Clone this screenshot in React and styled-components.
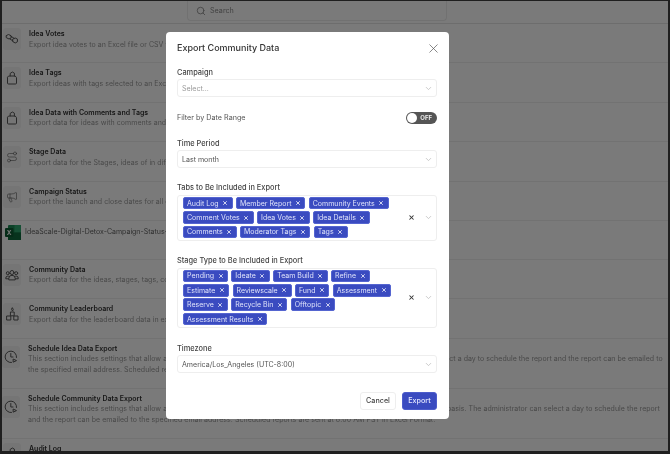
import styled, { createGlobalStyle } from "styled-components"
import { Search, X, ChevronDown, Megaphone, Route } from "lucide-react"

const GlobalStyle = createGlobalStyle`
  html, body {
    margin: 0;
    padding: 0;
    background: #222;
  }
  * {
    box-sizing: border-box;
  }
`

const Screen = styled.div`
  position: relative;
  width: 670px;
  height: 454px;
  overflow: hidden;
  font-family: Inter, "Liberation Sans", sans-serif;
  background: #fff;
  border: solid #1f1f1f;
  border-width: 1px 2px 3px 2px;
`

const Page = styled.div`
  display: flex;
  flex-direction: column;
  filter: blur(0.45px);
`

const TopBar = styled.div`
  height: 23px;
  display: flex;
  justify-content: center;
  border-bottom: 1px solid #e4e4e4;
`

const SearchBox = styled.div`
  width: 260px;
  height: 20px;
  margin-left: -36px;
  padding-left: 8px;
  display: flex;
  align-items: center;
  gap: 4px;
  font-size: 7.2px;
  color: #8a8a8a;
  border: 1px solid #ececec;
  border-top: 0;
  border-radius: 0 0 4px 4px;
`

const Row = styled.div`
  height: ${(p) => p.$height || 39.4}px;
  padding: 4px 0 0 ${(p) => (p.$wide ? 0 : 1)}px;
  display: flex;
  align-items: flex-start;
  gap: 8px;
  border-bottom: 1px solid #eee;
`

const IconBox = styled.div`
  flex: none;
  width: 18px;
  height: 22px;
  margin-top: ${(p) => p.$offset || 0}px;
  display: flex;
  align-items: center;
  justify-content: center;
  color: #555;
  background: #f4f4f4;
  border-radius: 3px;
`

const RowText = styled.div`
  min-width: 0;
  flex: 1;
`

const RowTitle = styled.div`
  font-size: 7px;
  line-height: 11.5px;
  font-weight: 600;
  color: #333;
  white-space: nowrap;
`

const RowDesc = styled.div`
  font-size: 7px;
  line-height: 10.5px;
  letter-spacing: 0.04px;
  color: #999;
  white-space: nowrap;
`

const FileRow = styled.div`
  height: 39px;
  padding: 4px 0 0 3px;
  display: flex;
  align-items: flex-start;
  gap: 2px;
  font-size: 7px;
  line-height: 14px;
  color: #666;
  border-bottom: 1px solid #eee;
`

const Overlay = styled.div`
  position: absolute;
  inset: 0;
  background: rgba(0, 0, 0, 0.52);
`

const Modal = styled.div`
  position: absolute;
  left: 163.5px;
  top: 31px;
  width: 283.5px;
  height: 387px;
  padding: 9px 12px 0 11.5px;
  display: flex;
  flex-direction: column;
  background: #fff;
  border-radius: 4px;
  filter: blur(0.3px);
`

const ModalHead = styled.div`
  height: 22px;
  display: flex;
  align-items: flex-start;
  justify-content: space-between;
`

const ModalTitle = styled.div`
  font-size: 9px;
  line-height: 13px;
  font-weight: 500;
  color: #333;
`

const CloseButton = styled.div`
  margin: 0 -4px 0 0;
  color: #555;
  line-height: 0;
`

const Field = styled.div`
  margin-top: ${(p) => p.$top || 0}px;
`

const Label = styled.div`
  font-size: 7.4px;
  line-height: 10px;
  font-weight: 500;
  color: #444;
  margin-bottom: 1.5px;
`

const SelectBox = styled.div`
  height: ${(p) => p.$height || 18}px;
  padding: 0 ${(p) => (p.$height ? 5 : 4)}px;
  display: flex;
  align-items: center;
  font-size: 7.05px;
  color: ${(p) => (p.$muted ? "#999" : "#555")};
  background: #fff;
  border: 1px solid #eee;
  border-radius: 3px;
`

const SelectValue = styled.div`
  flex: 1;
  min-width: 0;
`

const ChipList = styled.div`
  width: 218px;
  display: flex;
  flex-wrap: wrap;
  gap: 1.8px 3.4px;
`

const Chip = styled.div`
  height: 12.6px;
  padding: 0 3.4px 0 3px;
  display: flex;
  align-items: center;
  gap: 3.5px;
  font-size: 7px;
  color: #dfe3fa;
  white-space: nowrap;
  background: #3a4bc0;
  border: 1px solid #5565d0;
  border-radius: 2px;
`

const ChipClose = styled.span`
  display: flex;
  color: #fff;
`

const ClearAll = styled.span`
  display: flex;
  margin-right: 9px;
  color: #333;
`

const Caret = styled.span`
  display: flex;
  margin-right: ${(p) => (p.$plain ? -1 : -2)}px;
  color: #bbb;
`

const ToggleRow = styled.div`
  height: 14px;
  margin-top: 13.5px;
  display: flex;
  align-items: center;
  justify-content: space-between;
  font-size: 7.2px;
  color: #555;
`

const Toggle = styled.div`
  width: 31px;
  height: 12px;
  padding: 1px 5px 1px 1px;
  display: flex;
  align-items: center;
  justify-content: space-between;
  font-size: 6px;
  font-weight: 700;
  color: #eee;
  background: #555;
  border-radius: 6px;
`

const Knob = styled.div`
  width: 10px;
  height: 10px;
  background: #fff;
  border-radius: 50%;
`

const Actions = styled.div`
  margin-top: 18.5px;
  display: flex;
  justify-content: flex-end;
  gap: 6px;
`

const Button = styled.div`
  width: ${(p) => p.$width}px;
  height: 18px;
  display: flex;
  align-items: center;
  justify-content: center;
  font-size: 7.2px;
  font-weight: 500;
  color: ${(p) => (p.$primary ? "#e6e9ff" : "#444")};
  background: ${(p) => (p.$primary ? "#3a4bc0" : "#fff")};
  border: 1px solid ${(p) => (p.$primary ? "#4d5dcb" : "#eee")};
  border-radius: 3px;
`

const stroke = { fill: "none", stroke: "currentColor", strokeWidth: 1, strokeLinecap: "round", strokeLinejoin: "round" }

const LinkIcon = () => (
  <svg width="14" height="12" viewBox="0 0 14 12" {...stroke}>
    <path d="M1.500 2.500 3.500 1.500 6 2.700 6.200 5 4 6 1.600 4.800z" />
    <path d="M8 6 10.200 5 12.500 6.200 12.400 8.800 10.200 10 8 8.700z" />
    <path d="M6 3.200 9 5.300M5 6 8 8" />
  </svg>
)

const BagIcon = () => (
  <svg width="12" height="14" viewBox="0 0 12 14" {...stroke}>
    <path d="M3 5h6.200l1.300 1.600v5.400a1 1 0 0 1-1 1H2.500a1 1 0 0 1-1-1V6.600z" />
    <path d="M4.200 5V2.400L6.400 1l2 1.200V5" />
  </svg>
)

const ClockIcon = () => (
  <svg width="14" height="14" viewBox="0 0 14 14" {...stroke}>
    <path d="M12.500 7.500A5.700 5.700 0 1 0 7.500 12.500" />
    <path d="M6.800 3.500v3.500h2.200M9.500 9.200l3 1.400-3 1.400z" />
  </svg>
)

const TeamIcon = () => (
  <svg width="14" height="12" viewBox="0 0 14 12" {...stroke}>
    <circle cx="7" cy="3.500" r="2" />
    <circle cx="2.800" cy="4.200" r="1.500" />
    <circle cx="11.200" cy="4.200" r="1.500" />
    <path d="M3.800 10.500V9.300a3.200 3 0 0 1 6.400 0v1.200z" />
    <path d="M3.400 7.200H2.500A1.800 1.800 0 0 0 .8 9v.8h2.600M10.600 7.200h.9A1.800 1.800 0 0 1 13.200 9v.8h-2.600" />
  </svg>
)

const PodiumIcon = () => (
  <svg width="13" height="14" viewBox="0 0 13 14" {...stroke}>
    <path d="M6.500 1 7.300 2.500 6.500 4 5.700 2.500z" />
    <path d="M4.800 5h3.400v3.800H4.800zM1 9h3.800v4H1zM8.200 9H12v4H8.200z" />
  </svg>
)

const ExcelIcon = () => (
  <svg width="18" height="15" viewBox="0 0 18 15" style={{ flex: "none" }}>
    <rect x="3" y="0" width="13" height="15" rx="1" fill="#1b8a55" />
    <rect x="9.500" y="0" width="6.500" height="7.500" fill="#2fa86f" />
    <rect x="3" y="7.500" width="13" height="7.500" fill="#106b3e" />
    <rect x="0" y="3" width="8.500" height="9" rx="1" fill="#0e5c34" />
    <text x="4.200" y="10" textAnchor="middle" fontSize="6.500" fontWeight="700" fill="#fff">X</text>
  </svg>
)

const rows = [
  { title: "Idea Votes", desc: "Export idea votes to an Excel file or CSV file", icon: <LinkIcon /> },
  { title: "Idea Tags", desc: "Export ideas with tags selected to an Excel file", icon: <BagIcon /> },
  { title: "Idea Data with Comments and Tags", desc: "Export data for ideas with comments and tags", icon: <BagIcon /> },
  { title: "Stage Data", desc: "Export data for the Stages, ideas of in different stages", icon: <Route size={12} strokeWidth={1.2} /> },
  { title: "Campaign Status", desc: "Export the launch and close dates for all campaigns", icon: <Megaphone size={12} strokeWidth={1.2} /> },
]

const rowsAfter = [
  { title: "Community Data", desc: "Export data for the ideas, stages, tags, comments", icon: <TeamIcon /> },
  { title: "Community Leaderboard", desc: "Export data for the leaderboard data in excel", icon: <PodiumIcon /> },
]

const tabs = ["Audit Log", "Member Report", "Community Events", "Comment Votes", "Idea Votes", "Idea Details", "Comments", "Moderator Tags", "Tags"]
const stages = ["Pending", "Ideate", "Team Build", "Refine", "Estimate", "Reviewscale", "Fund", "Assessment", "Reserve", "Recycle Bin", "Offtopic", "Assessment Results"]

const ListRow = ({ icon, title, desc, desc2, ...rest }) => (
  <Row {...rest}>
    <IconBox $offset={desc2 ? 3 : 0}>{icon}</IconBox>
    <RowText>
      <RowTitle>{title}</RowTitle>
      <RowDesc>{desc}</RowDesc>
      {desc2 && <RowDesc>{desc2}</RowDesc>}
    </RowText>
  </Row>
)

const ChipSelect = ({ items, height }) => (
  <SelectBox $height={height}>
    <SelectValue>
      <ChipList>
        {items.map((item) => (
          <Chip key={item}>
            {item}
            <ChipClose>
              <X size={6} strokeWidth={3} />
            </ChipClose>
          </Chip>
        ))}
      </ChipList>
    </SelectValue>
    <ClearAll>
      <X size={7} strokeWidth={3.5} />
    </ClearAll>
    <Caret>
      <ChevronDown size={9} />
    </Caret>
  </SelectBox>
)

const PlainSelect = ({ value, muted }) => (
  <SelectBox $muted={muted}>
    <SelectValue>{value}</SelectValue>
    <Caret $plain>
      <ChevronDown size={9} />
    </Caret>
  </SelectBox>
)

const App = () => {
  return (
    <Screen>
      <GlobalStyle />
      <Page>
        <TopBar>
          <SearchBox>
            <Search size={10} />
            Search
          </SearchBox>
        </TopBar>
        {rows.map((row) => (
          <ListRow key={row.title} {...row} />
        ))}
        <FileRow>
          <ExcelIcon />
          IdeaScale-Digital-Detox-Campaign-Status-report.xlsx
        </FileRow>
        {rowsAfter.map((row) => (
          <ListRow key={row.title} {...row} />
        ))}
        <ListRow
          $height={50}
          $wide
          icon={<ClockIcon />}
          title="Schedule Idea Data Export"
          desc="This section includes settings that allow an administrator to configure the report on a regular basis. The administrator can select a day to schedule the report and the report can be emailed to"
          desc2="the specified email address. Scheduled reports are sent at 8:00 AM PST in Excel Format."
        />
        <ListRow
          $height={50}
          $wide
          icon={<ClockIcon />}
          title="Schedule Community Data Export"
          desc="This section includes settings that allow an administrator to configure the community data export report on a regular monthly basis. The administrator can select a day to schedule the report"
          desc2="and the report can be emailed to the specified email address. Scheduled reports are sent at 8:00 AM PST in Excel Format."
        />
        <ListRow icon={<BagIcon />} title="Audit Log" desc="Export the audit log" />
      </Page>
      <Overlay />
      <Modal>
        <ModalHead>
          <ModalTitle>Export Community Data</ModalTitle>
          <CloseButton>
            <X size={15} strokeWidth={1.1} />
          </CloseButton>
        </ModalHead>
        <Field $top={4.5}>
          <Label>Campaign</Label>
          <PlainSelect value="Select..." muted />
        </Field>
        <ToggleRow>
          Filter by Date Range
          <Toggle>
            <Knob />
            OFF
          </Toggle>
        </ToggleRow>
        <Field $top={14}>
          <Label>Time Period</Label>
          <PlainSelect value="Last month" />
        </Field>
        <Field $top={15}>
          <Label>Tabs to Be Included in Export</Label>
          <ChipSelect items={tabs} height={46} />
        </Field>
        <Field $top={15.5}>
          <Label>Stage Type to Be Included in Export</Label>
          <ChipSelect items={stages} height={60} />
        </Field>
        <Field $top={16}>
          <Label>Timezone</Label>
          <PlainSelect value="America/Los_Angeles (UTC-8:00)" />
        </Field>
        <Actions>
          <Button $width={36}>Cancel</Button>
          <Button $width={35} $primary>Export</Button>
        </Actions>
      </Modal>
    </Screen>
  )
}

export default App
